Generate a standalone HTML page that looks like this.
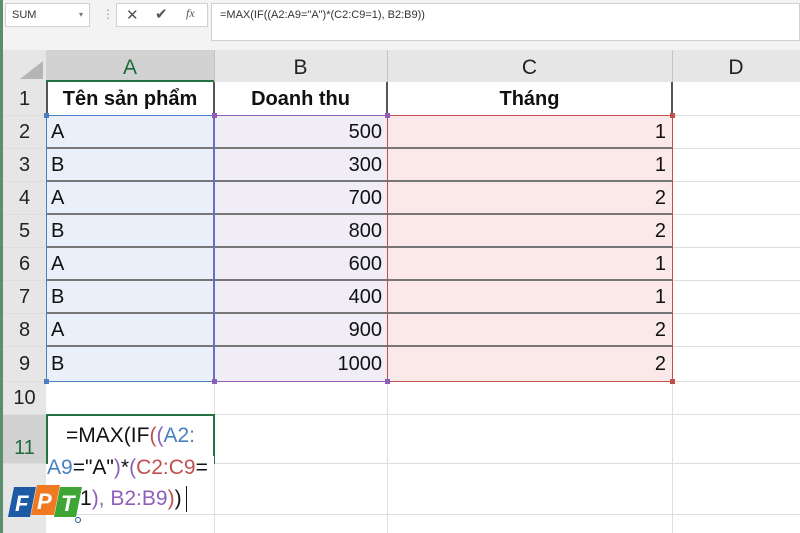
<!DOCTYPE html>
<html><head><meta charset="utf-8"><style>
*{margin:0;padding:0;box-sizing:border-box}
body{width:800px;height:533px;overflow:hidden;background:#fff;position:relative;font-family:"Liberation Sans",sans-serif}
.a{position:absolute}
.t{position:absolute;font-size:20px;color:#111;line-height:20px}
.hl{position:absolute;height:1px;background:#dedede}
.vl{position:absolute;width:1px;background:#dedede}
.dl{position:absolute;height:2px;background:#777}
.rh{position:absolute;left:3px;width:43px;text-align:center;font-size:20px;color:#222;line-height:20px}
.ch{position:absolute;top:56px;font-size:21px;color:#222;text-align:center}
.h{position:absolute;width:5px;height:5px}
</style></head><body>
<div class="a" style="left:0;top:0;width:800px;height:50px;background:#f3f3f3"></div>
<div class="a" style="left:0;top:0;width:3px;height:533px;background:#5b8f6b"></div>
<div class="a" style="left:5px;top:3px;width:85px;height:24px;background:#fff;border:1px solid #d0d0d0"></div>
<div class="a" style="left:12px;top:9px;font-size:11px;color:#333">SUM</div>
<div class="a" style="left:79px;top:10px;font-size:8px;color:#777">▾</div>
<div class="a" style="left:102px;top:7px;font-size:12px;color:#999">⋮</div>
<div class="a" style="left:116px;top:3px;width:92px;height:24px;background:#fff;border:1px solid #d0d0d0"></div>
<div class="a" style="left:126px;top:6px;font-size:15px;color:#555">✕</div>
<div class="a" style="left:155px;top:5px;font-size:15px;color:#555">✔</div>
<div class="a" style="left:186px;top:6px;font-size:12px;color:#555;font-style:italic;font-family:'Liberation Serif',serif">fx</div>
<div class="a" style="left:211px;top:3px;width:589px;height:38px;background:#fff;border:1px solid #d0d0d0"></div>
<div class="a" style="left:220px;top:9px;font-size:11px;color:#333">=MAX(IF((A2:A9="A")*(C2:C9=1), B2:B9))</div>
<div class="a" style="left:3px;top:50px;width:797px;height:32px;background:#e6e6e6"></div>
<div class="a" style="left:3px;top:82px;width:43px;height:451px;background:#e6e6e6"></div>
<div class="a" style="left:20px;top:61px;width:0;height:0;border-left:23px solid transparent;border-bottom:18px solid #b5b5b5"></div>
<div class="a" style="left:46px;top:50px;width:168px;height:32px;background:#d2d2d2;border-bottom:2px solid #217346"></div>
<div class="ch" style="left:46px;width:168px;color:#1e6b3c">A</div>
<div class="ch" style="left:214px;width:173px">B</div>
<div class="ch" style="left:387px;width:285px">C</div>
<div class="ch" style="left:672px;width:128px">D</div>
<div class="vl" style="left:214px;top:50px;height:32px;background:#c4c4c4"></div>
<div class="vl" style="left:387px;top:50px;height:32px;background:#c4c4c4"></div>
<div class="vl" style="left:672px;top:50px;height:32px;background:#c4c4c4"></div>
<div class="a" style="left:46px;top:115px;width:168px;height:266px;background:#e9f0f9"></div>
<div class="a" style="left:214px;top:115px;width:173px;height:266px;background:#f0edf6"></div>
<div class="a" style="left:387px;top:115px;width:285px;height:266px;background:#fbe9e9"></div>
<div class="a" style="left:3px;top:414px;width:43px;height:49px;background:#d2d2d2"></div>
<div class="vl" style="left:214px;top:82px;height:451px"></div>
<div class="vl" style="left:387px;top:82px;height:451px"></div>
<div class="vl" style="left:672px;top:82px;height:451px"></div>
<div class="hl" style="left:3px;top:115px;width:797px"></div>
<div class="hl" style="left:3px;top:148px;width:797px"></div>
<div class="hl" style="left:3px;top:181px;width:797px"></div>
<div class="hl" style="left:3px;top:214px;width:797px"></div>
<div class="hl" style="left:3px;top:247px;width:797px"></div>
<div class="hl" style="left:3px;top:280px;width:797px"></div>
<div class="hl" style="left:3px;top:313px;width:797px"></div>
<div class="hl" style="left:3px;top:346px;width:797px"></div>
<div class="hl" style="left:3px;top:381px;width:797px"></div>
<div class="hl" style="left:3px;top:414px;width:797px"></div>
<div class="hl" style="left:3px;top:463px;width:797px"></div>
<div class="hl" style="left:3px;top:514px;width:797px"></div>
<div class="dl" style="left:46px;top:147px;width:626px"></div>
<div class="dl" style="left:46px;top:180px;width:626px"></div>
<div class="dl" style="left:46px;top:213px;width:626px"></div>
<div class="dl" style="left:46px;top:246px;width:626px"></div>
<div class="dl" style="left:46px;top:279px;width:626px"></div>
<div class="dl" style="left:46px;top:312px;width:626px"></div>
<div class="dl" style="left:46px;top:345px;width:626px"></div>
<div class="a" style="left:46px;top:82px;width:2px;height:33px;background:#555"></div>
<div class="a" style="left:213px;top:82px;width:2px;height:33px;background:#555"></div>
<div class="a" style="left:386px;top:82px;width:2px;height:33px;background:#555"></div>
<div class="a" style="left:671px;top:82px;width:2px;height:33px;background:#555"></div>
<div class="a" style="left:46px;top:115px;width:169px;height:267px;border:1.5px solid #4a7fc0"></div>
<div class="a" style="left:213px;top:115px;width:175px;height:267px;border:1.5px solid #8d5fb8"></div>
<div class="a" style="left:387px;top:115px;width:286px;height:267px;border:1.5px solid #c0504d"></div>
<div class="h" style="left:44px;top:113px;background:#4a7fc0"></div><div class="h" style="left:212px;top:113px;background:#8d5fb8"></div>
<div class="h" style="left:44px;top:379px;background:#4a7fc0"></div><div class="h" style="left:212px;top:379px;background:#8d5fb8"></div>
<div class="h" style="left:385px;top:113px;background:#8d5fb8"></div><div class="h" style="left:670px;top:113px;background:#c0504d"></div>
<div class="h" style="left:385px;top:379px;background:#8d5fb8"></div><div class="h" style="left:670px;top:379px;background:#c0504d"></div>
<div class="rh" style="top:89px">1</div><div class="rh" style="top:122px">2</div><div class="rh" style="top:155px">3</div>
<div class="rh" style="top:188px">4</div><div class="rh" style="top:221px">5</div><div class="rh" style="top:254px">6</div>
<div class="rh" style="top:287px">7</div><div class="rh" style="top:320px">8</div><div class="rh" style="top:354px">9</div>
<div class="rh" style="top:388px">10</div><div class="rh" style="top:438px;color:#1e6b3c">11</div>
<div class="t" style="left:46px;top:89px;width:168px;text-align:center;font-weight:bold">Tên sản phẩm</div>
<div class="t" style="left:214px;top:89px;width:173px;text-align:center;font-weight:bold">Doanh thu</div>
<div class="t" style="left:387px;top:89px;width:285px;text-align:center;font-weight:bold">Tháng</div>
<div class="t" style="left:51px;top:122px">A</div><div class="t" style="left:51px;top:155px">B</div>
<div class="t" style="left:51px;top:188px">A</div><div class="t" style="left:51px;top:221px">B</div>
<div class="t" style="left:51px;top:254px">A</div><div class="t" style="left:51px;top:287px">B</div>
<div class="t" style="left:51px;top:320px">A</div><div class="t" style="left:51px;top:354px">B</div>
<div class="t" style="left:214px;top:122px;width:168px;text-align:right">500</div>
<div class="t" style="left:214px;top:155px;width:168px;text-align:right">300</div>
<div class="t" style="left:214px;top:188px;width:168px;text-align:right">700</div>
<div class="t" style="left:214px;top:221px;width:168px;text-align:right">800</div>
<div class="t" style="left:214px;top:254px;width:168px;text-align:right">600</div>
<div class="t" style="left:214px;top:287px;width:168px;text-align:right">400</div>
<div class="t" style="left:214px;top:320px;width:168px;text-align:right">900</div>
<div class="t" style="left:214px;top:354px;width:168px;text-align:right">1000</div>
<div class="t" style="left:387px;top:122px;width:279px;text-align:right">1</div>
<div class="t" style="left:387px;top:155px;width:279px;text-align:right">1</div>
<div class="t" style="left:387px;top:188px;width:279px;text-align:right">2</div>
<div class="t" style="left:387px;top:221px;width:279px;text-align:right">2</div>
<div class="t" style="left:387px;top:254px;width:279px;text-align:right">1</div>
<div class="t" style="left:387px;top:287px;width:279px;text-align:right">1</div>
<div class="t" style="left:387px;top:320px;width:279px;text-align:right">2</div>
<div class="t" style="left:387px;top:354px;width:279px;text-align:right">2</div>
<div class="a" style="left:46px;top:414px;width:169px;height:50px;border:2px solid #217346"></div>
<div class="a" style="left:48px;top:456px;width:166px;height:52px;background:#fff"></div>
<div class="t" style="left:66px;top:426px;font-size:21px">=MAX(IF<span style="color:#c0504d">(</span><span style="color:#8d5fb8">(</span><span style="color:#4a7fc0">A2:</span></div>
<div class="t" style="left:47px;top:458px;font-size:21px"><span style="color:#4a7fc0">A9</span>="A"<span style="color:#8d5fb8">)</span>*<span style="color:#8d5fb8">(</span><span style="color:#c0504d">C2:C9</span>=</div>
<div class="t" style="left:80px;top:489px;font-size:21px">1<span style="color:#8d5fb8">), B2:B9</span><span style="color:#c0504d">)</span>)</div>
<div class="a" style="left:186px;top:486px;width:1px;height:26px;background:#111"></div>
<svg class="a" style="left:8px;top:483px" width="74" height="40" viewBox="0 0 74 40">
<polygon points="6,4 28,4 22,34 0,34" fill="#1c5aa6"/>
<polygon points="29,2 52,2 46,32 23,32" fill="#f07a22"/>
<polygon points="52,4 74,4 68,34 46,34" fill="#3fa535"/>
<text x="7" y="28" font-family="Liberation Sans" font-weight="bold" font-style="italic" font-size="22" fill="#fff">F</text>
<text x="29" y="26" font-family="Liberation Sans" font-weight="bold" font-style="italic" font-size="22" fill="#fff">P</text>
<text x="53" y="28" font-family="Liberation Sans" font-weight="bold" font-style="italic" font-size="22" fill="#fff">T</text>
<circle cx="70" cy="37" r="2.5" fill="none" stroke="#1c5aa6" stroke-width="1"/>
</svg>
</body></html>
